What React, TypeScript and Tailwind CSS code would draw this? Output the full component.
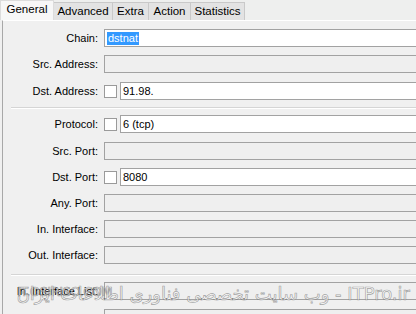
import React from "react";

type Row = {
  label: string;
  value?: string;
  check?: boolean;
  enabled?: boolean;
  selected?: boolean;
  mt: string;
};

const tabs = [
  { name: "General", w: "w-[54px]", active: true },
  { name: "Advanced", w: "w-[59px]" },
  { name: "Extra", w: "w-[36px]" },
  { name: "Action", w: "w-[42px]" },
  { name: "Statistics", w: "w-[54px]" },
];

function Field({ row }: { row: Row }) {
  return (
    <div className={`flex items-center h-[18px] ${row.mt}`}>
      <div className="w-[95px] text-right text-[11px] text-black whitespace-nowrap">
        {row.label}
      </div>
      <div className="ml-[6px] flex-1 flex items-center">
        {row.check && (
          <div className="w-[13px] h-[13px] border border-[#9a9a9a] bg-white mr-[3px] shrink-0" />
        )}
        <div
          className={`flex-1 h-[18px] border border-[#a2a2a2] flex items-center px-[2px] text-[11px] ${
            row.enabled ? "bg-white" : "bg-[#efefef]"
          }`}
        >
          {row.selected ? (
            <span className="bg-[#3399ff] text-white leading-[13px] px-[1px]">
              {row.value}
            </span>
          ) : (
            <span className="text-black">{row.value}</span>
          )}
        </div>
      </div>
    </div>
  );
}

function Separator({ mt }: { mt: string }) {
  return (
    <div className={`${mt} ml-[8px] h-[2px] border-t border-[#d5d5d5] border-b border-b-white`} />
  );
}

export default function App() {
  const top: Row[] = [
    { label: "Chain:", value: "dstnat", enabled: true, selected: true, mt: "mt-[8px]" },
    { label: "Src. Address:", mt: "mt-[8px]" },
    { label: "Dst. Address:", value: "91.98.", check: true, enabled: true, mt: "mt-[9px]" },
  ];
  const middle: Row[] = [
    { label: "Protocol:", value: "6 (tcp)", check: true, enabled: true, mt: "mt-[6px]" },
    { label: "Src. Port:", mt: "mt-[9px]" },
    { label: "Dst. Port:", value: "8080", check: true, enabled: true, mt: "mt-[8px]" },
    { label: "Any. Port:", mt: "mt-[8px]" },
    { label: "In. Interface:", mt: "mt-[8px]" },
    { label: "Out. Interface:", mt: "mt-[8px]" },
  ];
  const bottom: Row[] = [
    { label: "In. Interface List:", mt: "mt-[6px]" },
    { label: "Out. Interface List:", mt: "mt-[9px]" },
  ];

  return (
    <div className="relative w-[416px] h-[314px] overflow-hidden bg-[#f0f0f0] font-['Liberation_Sans',Arial,sans-serif]">
      {/* tab strip */}
      <div className="flex items-end h-[20px] bg-[#eeefee]">
        {tabs.map((t) =>
          t.active ? (
            <div
              key={t.name}
              className={`${t.w} h-[20px] bg-[#f7f7f7] border-t border-l border-r border-[#dcdcdc] text-[11.5px] text-black flex items-center justify-center pb-[2px]`}
            >
              {t.name}
            </div>
          ) : (
            <div
              key={t.name}
              className={`${t.w} h-[18px] bg-[#e3e3e3] border-t border-r border-[#c9c9c9] text-[11.5px] text-black flex items-center justify-center`}
            >
              {t.name}
            </div>
          )
        )}
      </div>

      {/* panel */}
      <div className="ml-[2px] border-l border-[#a8a8a8] border-t border-t-white w-[480px] h-[300px]">
        {top.map((r) => (
          <Field key={r.label} row={r} />
        ))}
        <Separator mt="mt-[7px]" />
        {middle.map((r) => (
          <Field key={r.label} row={r} />
        ))}
        <Separator mt="mt-[10px]" />
        {bottom.map((r) => (
          <Field key={r.label} row={r} />
        ))}
      </div>

      {/* watermark */}
      <div className="absolute left-[17px] top-[282px] text-[13px] tracking-[-0.5px] text-[rgba(255,255,255,0.55)] [-webkit-text-stroke:0.7px_rgba(90,90,90,0.6)] font-['DejaVu_Sans',sans-serif]">
        IT.OSIRISO.COM
      </div>
      <div
        dir="ltr"
        className="absolute right-[6px] top-[280px] text-right whitespace-nowrap text-[18px] text-[rgba(255,255,255,0.6)] [-webkit-text-stroke:0.7px_rgba(90,90,90,0.55)] font-['DejaVu_Sans',sans-serif]"
      >
        وب سایت تخصصی فناوری اطلاعات ایران - ITPro.ir
      </div>
    </div>
  );
}
